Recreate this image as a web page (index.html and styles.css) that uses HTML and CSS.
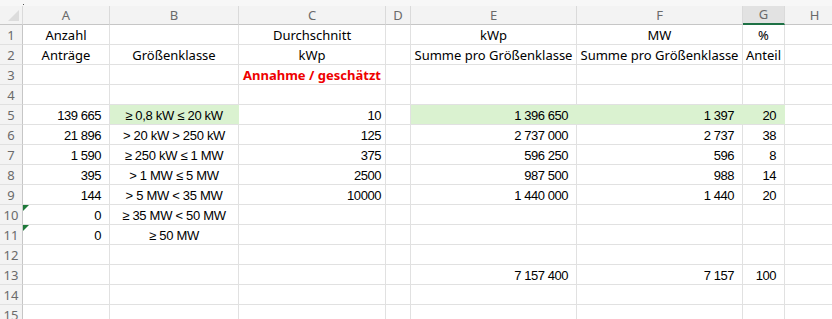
FILE: index.html
```html
<!DOCTYPE html>
<html lang="de">
<head>
<meta charset="utf-8">
<title>Größenklassen</title>
<link rel="stylesheet" href="styles.css">
</head>
<body>
<div class="topstrip"><span class="dot"></span></div>
<div class="sheet">
  <div class="ch corner"><span class="tri"></span></div>
  <div class="ch">A</div><div class="ch">B</div><div class="ch">C</div><div class="ch">D</div><div class="ch">E</div><div class="ch">F</div><div class="ch sel">G</div><div class="ch">H</div>

  <div class="rh">1</div>
  <div class="c t">Anzahl</div><div class="c"></div><div class="c t">Durchschnitt</div><div class="c"></div><div class="c t">kWp</div><div class="c t">MW</div><div class="c t">%</div><div class="c"></div>

  <div class="rh">2</div>
  <div class="c t">Anträge</div><div class="c t">Größenklasse</div><div class="c t">kWp</div><div class="c"></div><div class="c t">Summe pro Größenklasse</div><div class="c t">Summe pro Größenklasse</div><div class="c t">Anteil</div><div class="c"></div>

  <div class="rh">3</div>
  <div class="c"></div><div class="c"></div><div class="c t red">Annahme / geschätzt</div><div class="c"></div><div class="c"></div><div class="c"></div><div class="c"></div><div class="c"></div>

  <div class="rh">4</div>
  <div class="c"></div><div class="c"></div><div class="c"></div><div class="c"></div><div class="c"></div><div class="c"></div><div class="c"></div><div class="c"></div>

  <div class="rh">5</div>
  <div class="c n">139 665</div><div class="c l green">≥ 0,8 kW ≤ 20 kW</div><div class="c n p">10</div><div class="c"></div><div class="c n green">1 396 650</div><div class="c n green">1 397</div><div class="c n green">20</div><div class="c"></div>

  <div class="rh">6</div>
  <div class="c n">21 896</div><div class="c l">&gt; 20 kW &gt; 250 kW</div><div class="c n p">125</div><div class="c"></div><div class="c n">2 737 000</div><div class="c n">2 737</div><div class="c n">38</div><div class="c"></div>

  <div class="rh">7</div>
  <div class="c n">1 590</div><div class="c l">≥ 250 kW ≤ 1 MW</div><div class="c n p">375</div><div class="c"></div><div class="c n">596 250</div><div class="c n">596</div><div class="c n">8</div><div class="c"></div>

  <div class="rh">8</div>
  <div class="c n">395</div><div class="c l">&gt; 1 MW ≤ 5 MW</div><div class="c n p">2500</div><div class="c"></div><div class="c n">987 500</div><div class="c n">988</div><div class="c n">14</div><div class="c"></div>

  <div class="rh">9</div>
  <div class="c n">144</div><div class="c l">&gt; 5 MW &lt; 35 MW</div><div class="c n p">10000</div><div class="c"></div><div class="c n">1 440 000</div><div class="c n">1 440</div><div class="c n">20</div><div class="c"></div>

  <div class="rh">10</div>
  <div class="c n err">0</div><div class="c l">≥ 35 MW &lt; 50 MW</div><div class="c"></div><div class="c"></div><div class="c"></div><div class="c"></div><div class="c"></div><div class="c"></div>

  <div class="rh">11</div>
  <div class="c n err">0</div><div class="c l">≥ 50 MW</div><div class="c"></div><div class="c"></div><div class="c"></div><div class="c"></div><div class="c"></div><div class="c"></div>

  <div class="rh">12</div>
  <div class="c"></div><div class="c"></div><div class="c"></div><div class="c"></div><div class="c"></div><div class="c"></div><div class="c"></div><div class="c"></div>

  <div class="rh">13</div>
  <div class="c"></div><div class="c"></div><div class="c"></div><div class="c"></div><div class="c n">7 157 400</div><div class="c n">7 157</div><div class="c n">100</div><div class="c"></div>

  <div class="rh">14</div>
  <div class="c"></div><div class="c"></div><div class="c"></div><div class="c"></div><div class="c"></div><div class="c"></div><div class="c"></div><div class="c"></div>

  <div class="rh">15</div>
  <div class="c"></div><div class="c"></div><div class="c"></div><div class="c"></div><div class="c"></div><div class="c"></div><div class="c"></div><div class="c"></div>
</div>
</body>
</html>
```

FILE: styles.css
```css
html, body {
  margin: 0;
  padding: 0;
  background: #ffffff;
  overflow: hidden;
}
.topstrip {
  height: 6px;
  background: #f7f7f7;
  position: relative;
}
.dot {
  position: absolute;
  left: 23px;
  top: 4px;
  width: 1px;
  height: 1px;
  background: #555;
}
.sheet {
  display: grid;
  grid-template-columns: 23px 87px 129px 147px 25px 166px 166px 42px 60px;
  grid-template-rows: 19px repeat(15, 20px);
  font-family: "Noto Sans", "Open Sans", sans-serif;
  font-size: 13px;
  color: #000;
}
.ch {
  box-sizing: border-box;
  background: #f3f3f3;
  border-right: 1px solid #dadada;
  border-bottom: 1px solid #c6c6c6;
  color: #6a6a6a;
  font-size: 13px;
  display: flex;
  align-items: center;
  justify-content: center;
  line-height: 1;
}
.ch.sel {
  background: #e2e2e2;
  border-bottom: 2px solid #1e7145;
}
.corner {
  position: relative;
}
.tri {
  position: absolute;
  right: 3px;
  bottom: 3px;
  width: 0;
  height: 0;
  border-left: 11px solid transparent;
  border-bottom: 11px solid #dcdcdc;
}
.rh {
  box-sizing: border-box;
  background: #f3f3f3;
  border-right: 1px solid #c6c6c6;
  border-bottom: 1px solid #e0e0e0;
  color: #6a6a6a;
  font-size: 13px;
  display: flex;
  align-items: center;
  justify-content: center;
  padding-top: 1px;
}
.c {
  box-sizing: border-box;
  border-right: 1px solid #e1e1e1;
  border-bottom: 1px solid #e1e1e1;
  display: flex;
  align-items: center;
  white-space: nowrap;
  position: relative;
  padding-top: 1px;
}
.t {
  justify-content: center;
  overflow: visible;
}
.red {
  color: #ee0000;
  font-weight: bold;
}
.n {
  justify-content: flex-end;
  padding-right: 8px;
  font-family: "Liberation Sans", Arial, sans-serif;
  font-size: 13px;
  letter-spacing: -0.45px;
}
.n.p {
  padding-right: 4px;
}
.l {
  justify-content: center;
  font-family: "Liberation Sans", Arial, sans-serif;
  font-size: 13px;
  letter-spacing: -0.3px;
}
.green {
  background: #daf2d0;
  border-right-color: #daf2d0;
}
.err::before {
  content: "";
  position: absolute;
  left: 0;
  top: 0;
  width: 0;
  height: 0;
  border-top: 6px solid #1e7a3a;
  border-right: 6px solid transparent;
}
```
